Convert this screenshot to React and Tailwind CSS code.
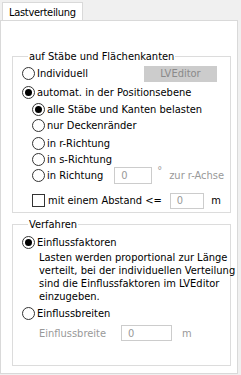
export default function App() {
  return (
    <div className="w-[241px] h-[375px] bg-[#f0f0f0] overflow-hidden text-[11px] leading-[13px] text-black" style={{ fontFamily: '"DejaVu Sans Condensed", "DejaVu Sans", sans-serif' }}>
      {/* tab */}
      <div className="ml-[2px] pt-[2px]">
        <div className="w-[81px] h-[19px] bg-white border border-b-0 border-[#d9d9d9] pl-[6px] pt-[3px] whitespace-nowrap tracking-[-0.3px]">Lastverteilung</div>
      </div>
      <div className="w-[238px] h-[354px] bg-white border border-[#d9d9d9] -mt-px pl-[11px] pt-[29px]">
        {/* group 1 */}
        <fieldset className="w-[219px] min-w-0 h-[163px] border border-[#dcdcdc] px-[9px]">
          <legend className="ml-[6px] px-[1px]">auf Stäbe und Flächenkanten</legend>
          <div className="flex items-center h-[17px] mt-[2px] justify-between">
            <Radio label="Individuell" />
            <div className="w-[73px] h-[16px] bg-[#cccccc] text-[#8a8a8a] flex items-center justify-center mr-[4px]">LVEditor</div>
          </div>
          <div className="mt-[2px]"><Radio checked label="automat. in der Positionsebene" /></div>
          <div className="pl-[10px]">
            <Radio checked label="alle Stäbe und Kanten belasten" h="h-[16px]" />
            <Radio label="nur Deckenränder" h="h-[16px]" />
            <div className="mt-[2px]"><Radio label="in r-Richtung" h="h-[16px]" /></div>
            <Radio label="in s-Richtung" h="h-[16px]" />
            <div className="flex items-center h-[16px]">
              <Radio label="in Richtung" h="h-[16px]" />
              <div className="ml-[11px] w-[38px] h-[17px] border border-[#cccccc] text-[#999] pl-[6px] flex items-center shrink-0">0</div>
              <span className="ml-[5px] text-[#999] self-start -mt-[3px]">°</span>
              <span className="ml-[7px] text-[#999] whitespace-nowrap">zur r-Achse</span>
            </div>
            <div className="flex items-center h-[17px] mt-[9px]">
              <span className="w-[13px] h-[13px] border border-[#333] bg-white shrink-0" />
              <span className="ml-[3px] whitespace-nowrap">mit einem Abstand &lt;=</span>
              <div className="ml-[8px] w-[38px] h-[16px] border border-[#cccccc] text-[#999] pl-[6px] flex items-center">0</div>
              <span className="ml-[7px]">m</span>
            </div>
          </div>
        </fieldset>
        {/* group 2 */}
        <fieldset className="w-[219px] min-w-0 h-[148px] border border-[#dcdcdc] px-[9px] mt-[5px]">
          <legend className="ml-[6px] px-[1px]">Verfahren</legend>
          <div className="mt-[3px]"><Radio checked label="Einflussfaktoren" /></div>
          <p className="pl-[17px] leading-[13px] whitespace-nowrap">
            Lasten werden proportional zur Länge<br />
            verteilt, bei der individuellen Verteilung<br />
            sind die Einflussfaktoren im LVEditor<br />
            einzugeben.
          </p>
          <div className="mt-[2px]"><Radio label="Einflussbreiten" /></div>
          <div className="flex items-center h-[16px] mt-[3px] pl-[17px] text-[#999]">
            <span className="w-[82px]">Einflussbreite</span>
            <div className="w-[51px] h-[16px] border border-[#cccccc] pl-[6px] flex items-center">0</div>
            <span className="ml-[10px]">m</span>
          </div>
        </fieldset>
      </div>
    </div>
  )
}

function Radio({ label, checked, h = 'h-[17px]' }) {
  return (
    <label className={`flex items-center ${h}`}>
      <span className="w-[13px] h-[13px] rounded-full border border-[#333] bg-white flex items-center justify-center shrink-0">
        {checked && <span className="w-[7px] h-[7px] rounded-full bg-black" />}
      </span>
      <span className="ml-[2px] whitespace-nowrap">{label}</span>
    </label>
  )
}
